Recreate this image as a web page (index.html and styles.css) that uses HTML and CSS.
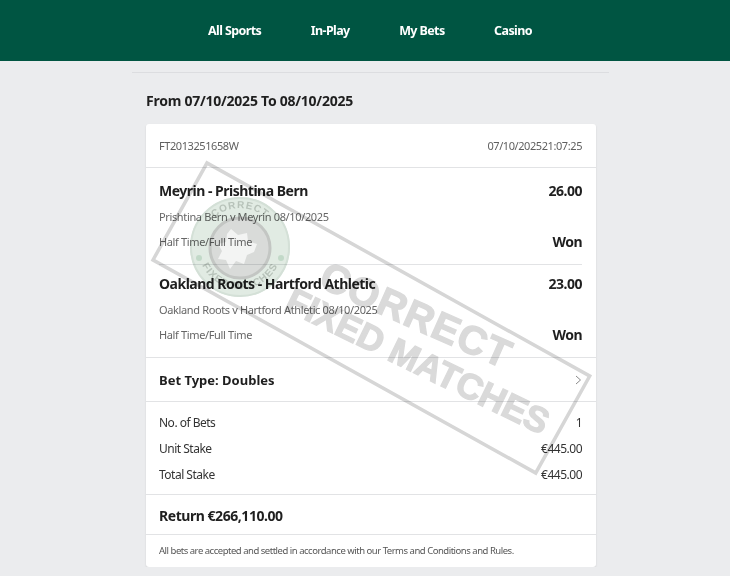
FILE: index.html
```html
<!DOCTYPE html>
<html lang="en">
<head>
    <meta charset="UTF-8">
    <meta name="viewport" content="width=device-width, initial-scale=1.0">
    <title>My Bets</title>
    <link rel="stylesheet" href="styles.css">
</head>
<body>
    <nav class="topnav">
        <a href="#">All Sports</a>
        <a href="#">In-Play</a>
        <a href="#">My Bets</a>
        <a href="#">Casino</a>
    </nav>

    <main class="page">
        <h1 class="range">From 07/10/2025 To 08/10/2025</h1>

        <section class="card">
            <div class="card-head">
                <span>FT2013251658W</span>
                <span>07/10/202521:07:25</span>
            </div>

            <div class="legs">
                <div class="leg">
                    <div class="row leg-title"><span>Meyrin - Prishtina Bern</span><span>26.00</span></div>
                    <div class="leg-match">Prishtina Bern v Meyrin 08/10/2025</div>
                    <div class="row leg-foot"><span>Half Time/Full Time</span><strong>Won</strong></div>
                </div>
                <div class="leg">
                    <div class="row leg-title"><span>Oakland Roots - Hartford Athletic</span><span>23.00</span></div>
                    <div class="leg-match">Oakland Roots v Hartford Athletic 08/10/2025</div>
                    <div class="row leg-foot"><span>Half Time/Full Time</span><strong>Won</strong></div>
                </div>
            </div>

            <div class="row bet-type">
                <span>Bet Type: Doubles</span>
                <svg class="chevron" width="7" height="10" viewBox="0 0 7 10"><path d="M1 1l4.5 4L1 9" fill="none" stroke="#8a8a8a" stroke-width="1"/></svg>
            </div>

            <div class="totals">
                <div class="row"><span>No. of Bets</span><span>1</span></div>
                <div class="row"><span>Unit Stake</span><span>€445.00</span></div>
                <div class="row"><span>Total Stake</span><span>€445.00</span></div>
            </div>

            <div class="return">Return €266,110.00</div>
            <div class="terms">All bets are accepted and settled in accordance with our Terms and Conditions and Rules.</div>
        </section>
    </main>

    <!-- watermark lies over the card -->
    <svg class="stamp" width="730" height="576" viewBox="0 0 730 576">
        <defs>
            <path id="seal-top" d="M201 247a39 39 0 0 1 78 0"/>
            <path id="seal-bottom" d="M198 247a42 42 0 0 0 84 0"/>
        </defs>
        <rect x="0" y="0" width="438" height="111" class="stamp-box" transform="translate(207 163) rotate(29.1)"/>
        <text class="stamp-text" transform="translate(317 286) rotate(24)" textLength="204">CORRECT</text>
        <text class="stamp-text small" transform="translate(283 309) rotate(26)" textLength="288">FIXED MATCHES</text>
        <circle cx="240" cy="247" r="50" fill="#e1ebe3"/>
        <circle cx="240" cy="247" r="49" fill="none" stroke="#d4e0d7" stroke-width="2"/>
        <circle cx="240" cy="248" r="30" fill="#d9dbd9" stroke="#c3c6c3" stroke-width="3"/>
        <text class="seal-text"><textPath href="#seal-top" startOffset="50%">CORRECT</textPath></text>
        <text class="seal-text"><textPath href="#seal-bottom" startOffset="50%">FIXED MATCHES</textPath></text>
        <circle cx="199" cy="258" r="3" fill="#c2d9c8"/>
        <circle cx="281" cy="258" r="3" fill="#c2d9c8"/>
        <path d="M231 229l7 6 9-2 1 8 9 3-3 8-7 3-3 9-8-3-6 8-4-9-8-1 4-8-4-7 8-2 1-8z" fill="#f3f4f3"/>
    </svg>
</body>
</html>
```

FILE: styles.css
```css
* {
    box-sizing: border-box;
}

body {
    margin: 0;
    background-color: #ebecee;
    color: #1f1f1f;
    font-family: "Noto Sans", "Open Sans", sans-serif;
    font-size: 12px;
    overflow: hidden;
}

.topnav {
    height: 61px;
    background-color: #005542;
    display: flex;
    justify-content: center;
    align-items: center;
    gap: 49.5px;
    padding-left: 10px;
}

.topnav a {
    color: #fff;
    font-size: 12.5px;
    font-weight: 700;
    letter-spacing: -0.6px;
    text-decoration: none;
}

.page {
    width: 477px;
    margin: 11px 0 0 132px;
    padding: 0 13px 0 14px;
    border-top: 1px solid #dcdde0;
}

.range {
    margin: 0;
    padding: 18px 0 14px;
    font-size: 14px;
    line-height: 19px;
    font-weight: 700;
    letter-spacing: -0.25px;
}

.card {
    background-color: #fff;
    border-radius: 3px;
    box-shadow: 0 1px 2px rgba(0, 0, 0, 0.12);
}

.row {
    display: flex;
    justify-content: space-between;
    align-items: center;
}

.card-head {
    display: flex;
    justify-content: space-between;
    align-items: center;
    height: 44px;
    padding: 0 14px 0 13px;
    border-bottom: 1px solid #e2e3e5;
    color: #5f5f5f;
    font-size: 11px;
    letter-spacing: -0.42px;
}

.legs {
    padding: 4px 14px 0 13px;
    border-bottom: 1px solid #e2e3e5;
}

.leg {
    height: 93px;
    padding-top: 9px;
    border-bottom: 1px solid #e2e3e5;
}

.leg:last-child {
    height: 92px;
    border-bottom: none;
}

.leg-title {
    font-size: 14px;
    line-height: 20px;
    font-weight: 700;
    letter-spacing: -0.5px;
}

.leg-match {
    margin-top: 7px;
    line-height: 18px;
    font-size: 11px;
    letter-spacing: -0.36px;
    color: #666;
}

.leg-foot {
    margin-top: 6px;
    line-height: 20px;
    font-size: 11px;
    letter-spacing: -0.36px;
    color: #666;
}

.leg-foot strong {
    font-size: 14px;
    letter-spacing: -0.5px;
    color: #1f1f1f;
}

.bet-type {
    height: 44px;
    padding: 0 14px 0 13px;
    border-bottom: 1px solid #e2e3e5;
    font-size: 13px;
    font-weight: 700;
}

.totals {
    height: 93px;
    padding: 8px 14px 0 13px;
    border-bottom: 1px solid #e2e3e5;
    font-size: 12px;
    letter-spacing: -0.5px;
    color: #333;
}

.totals .row {
    height: 25.7px;
}

.return {
    height: 40px;
    padding: 0 13px;
    border-bottom: 1px solid #e2e3e5;
    font-size: 14px;
    line-height: 41px;
    font-weight: 700;
    letter-spacing: -0.45px;
}

.terms {
    height: 32px;
    padding: 0 13px;
    font-size: 9.5px;
    line-height: 32px;
    letter-spacing: -0.48px;
    color: #555;
}

.stamp {
    position: absolute;
    top: 0;
    left: 0;
    pointer-events: none;
    mix-blend-mode: multiply;
}

.stamp-box {
    fill: none;
    stroke: #d6d6d6;
    stroke-width: 3.5;
}

.stamp-text {
    font-family: "Liberation Sans", sans-serif;
    font-size: 40px;
    font-weight: 700;
    fill: #dadada;
    stroke: #dadada;
    stroke-width: 1.2;
}

.stamp-text.small {
    font-size: 36px;
}

.seal-text {
    font-family: "Liberation Sans", sans-serif;
    font-size: 10px;
    font-weight: 700;
    letter-spacing: 1px;
    text-anchor: middle;
    fill: #b7c2b9;
}
```
